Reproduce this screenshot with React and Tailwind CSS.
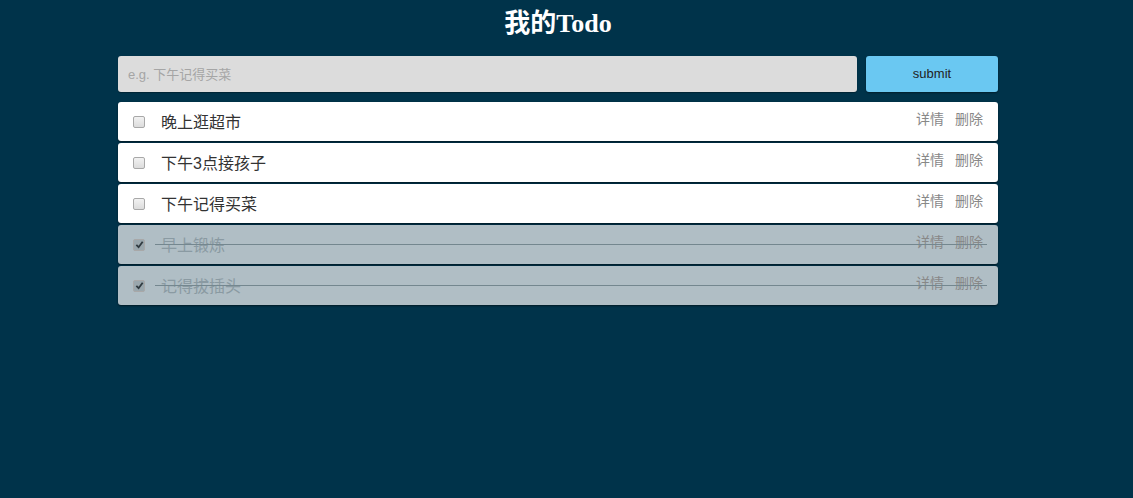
import React, { useState } from 'react';

const INITIAL = [
  { id: 1, text: '晚上逛超市', done: false },
  { id: 2, text: '下午3点接孩子', done: false },
  { id: 3, text: '下午记得买菜', done: false },
  { id: 4, text: '早上锻炼', done: true },
  { id: 5, text: '记得拔插头', done: true },
];

const CJK = "font-['Liberation_Sans','Noto_Sans_CJK_SC',sans-serif]";

// old-style grey checkbox
function Check({ checked, onChange }) {
  return (
    <button
      type="button"
      onClick={onChange}
      className={`ml-[15px] w-[12px] h-[12px] shrink-0 rounded-[2px] border border-[#a8a8a8] flex items-center justify-center ${
        checked ? 'bg-[#9aa7ad]' : 'bg-gradient-to-b from-[#f2f2f2] to-[#dcdcdc]'
      }`}
    >
      {checked && (
        <svg viewBox="0 0 10 10" className="w-[9px] h-[9px]">
          <path d="M1.5 5.5 L4 8 L8.5 2" fill="none" stroke="#2f3a40" strokeWidth="2" />
        </svg>
      )}
    </button>
  );
}

function TodoItem({ item, onToggle, onRemove }) {
  return (
    <li
      className={`relative flex items-center h-[39px] rounded-[3px] shadow-[0_1px_2px_rgba(0,0,0,0.5)] ${
        item.done ? 'bg-[#b0bec5]' : 'bg-white'
      }`}
    >
      <Check checked={item.done} onChange={() => onToggle(item.id)} />
      <span className={`ml-[16px] mt-[2px] text-[16px] ${item.done ? 'text-[#8a9aa2]' : 'text-[#333]'}`}>
        {item.text}
      </span>
      <div className="ml-auto mr-[15px] self-start mt-[7px] flex gap-[11px] text-[14px] text-[#888]">
        <a className="cursor-pointer">详情</a>
        <a className="cursor-pointer" onClick={() => onRemove(item.id)}>删除</a>
      </div>
      {item.done && (
        <div className="absolute left-[37px] right-[11px] top-[19px] h-px bg-[#74878f]" />
      )}
    </li>
  );
}

export default function App() {
  const [todos, setTodos] = useState(INITIAL);
  const [draft, setDraft] = useState('');

  const toggle = id => setTodos(t => t.map(x => (x.id === id ? { ...x, done: !x.done } : x)));
  const remove = id => setTodos(t => t.filter(x => x.id !== id));
  const submit = () => {
    if (!draft.trim()) return;
    setTodos(t => [{ id: Date.now(), text: draft.trim(), done: false }, ...t]);
    setDraft('');
  };

  return (
    <div className={`min-h-[498px] bg-[#00334a] ${CJK}`}>
      <div className="w-[880px] ml-[118px] pt-[9px]">
        <h1 className="text-center text-white font-bold text-[26px] leading-[30px] font-['Liberation_Serif','Noto_Sans_CJK_SC',serif]">
          我的Todo
        </h1>

        <div className="flex gap-[9px] mt-[17px]">
          <input
            value={draft}
            onChange={e => setDraft(e.target.value)}
            placeholder="e.g. 下午记得买菜"
            className="flex-1 h-[36px] rounded-[3px] bg-[#dcdcdc] px-[10px] text-[13px] text-[#333] placeholder:text-[#a5a5a5] outline-none shadow-[0_1px_1px_rgba(0,0,0,0.3)]"
          />
          <button
            onClick={submit}
            className="w-[132px] h-[36px] rounded-[3px] bg-[#6ac8f2] text-[13px] text-[#222] shadow-[0_1px_2px_rgba(0,0,0,0.4)]"
          >
            submit
          </button>
        </div>

        <ul className="mt-[10px] flex flex-col gap-[2px]">
          {todos.map(item => (
            <TodoItem key={item.id} item={item} onToggle={toggle} onRemove={remove} />
          ))}
        </ul>
      </div>
    </div>
  );
}
